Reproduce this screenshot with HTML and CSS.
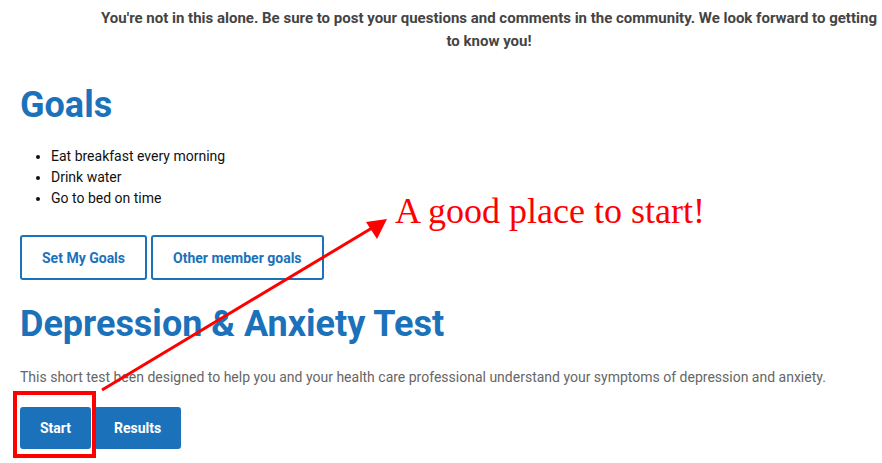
FILE: index.html
```html
<!DOCTYPE html>
<html>
<head>
<meta charset="utf-8">
<link rel="stylesheet" href="styles.css">
</head>
<body>
<div class="page">
  <p class="intro">You're not in this alone. Be sure to post your questions and comments in the community. We look forward to getting to know you!</p>

  <section class="goals">
    <h1 class="title">Goals</h1>
    <ul class="goal-list">
      <li>Eat breakfast every morning</li>
      <li>Drink water</li>
      <li>Go to bed on time</li>
    </ul>
    <div class="btn-row outline-row">
      <a class="btn btn-outline">Set My Goals</a>
      <a class="btn btn-outline">Other member goals</a>
    </div>
  </section>

  <section class="test">
    <h1 class="title title-test">Depression &amp; Anxiety Test</h1>
    <p class="desc">This short test been designed to help you and your health care professional understand your symptoms of depression and anxiety.</p>
    <div class="btn-row solid-row">
      <a class="btn btn-solid">Start</a>
      <a class="btn btn-solid">Results</a>
    </div>
  </section>

  <svg class="annot-svg" width="882" height="463" viewBox="0 0 882 463">
    <rect x="15" y="393" width="79" height="63" fill="none" stroke="#ff0000" stroke-width="4"/>
    <line x1="102" y1="390" x2="372" y2="228" stroke="#ff0000" stroke-width="3"/>
    <polygon points="387,219 366,222 377,239" fill="#ff0000"/>
  </svg>
  <div class="annot-text">A good place to start!</div>
</div>
</body>
</html>
```

FILE: styles.css
```css
html, body {
  margin: 0;
  padding: 0;
  background: #ffffff;
}

.page {
  position: relative;
  width: 882px;
  height: 463px;
  overflow: hidden;
  font-family: Roboto, "Liberation Sans", sans-serif;
  padding-left: 20px;
  box-sizing: border-box;
}

.intro {
  margin: 0 0 0 78px;
  padding-top: 7px;
  width: 782px;
  text-align: center;
  font-weight: 700;
  font-size: 15px;
  line-height: 23px;
  color: #444444;
}

.title {
  margin: 0;
  font-size: 36px;
  font-weight: 700;
  line-height: 46px;
  color: #1b72ba;
}

.goals .title {
  margin-top: 29px;
}

.goal-list {
  margin: 18px 0 0 0;
  padding-left: 31px;
  font-size: 14px;
  line-height: 21px;
  color: #111111;
}

.btn-row {
  display: flex;
  gap: 4px;
}

.outline-row {
  margin-top: 26px;
}

.btn {
  display: flex;
  align-items: center;
  justify-content: center;
  box-sizing: border-box;
  padding: 0 20px;
  font-size: 14px;
  font-weight: 700;
  border-radius: 3px;
  text-decoration: none;
}

.btn-outline {
  height: 45px;
  border: 2px solid #1b72ba;
  color: #1b72ba;
  background: #ffffff;
}

.title-test {
  margin-top: 21px;
}

.desc {
  margin: 20px 0 0 0;
  font-size: 14px;
  line-height: 20px;
  color: #666666;
}

.solid-row {
  margin-top: 20px;
  gap: 3px;
}

.btn-solid {
  height: 42px;
  background: #1b72ba;
  color: #ffffff;
}

.annot-svg {
  position: absolute;
  left: 0;
  top: 0;
}

.annot-text {
  position: absolute;
  left: 395px;
  top: 190px;
  font-family: "Liberation Serif", "Times New Roman", serif;
  font-size: 36px;
  line-height: 42px;
  color: #ff0000;
  white-space: nowrap;
}
```
